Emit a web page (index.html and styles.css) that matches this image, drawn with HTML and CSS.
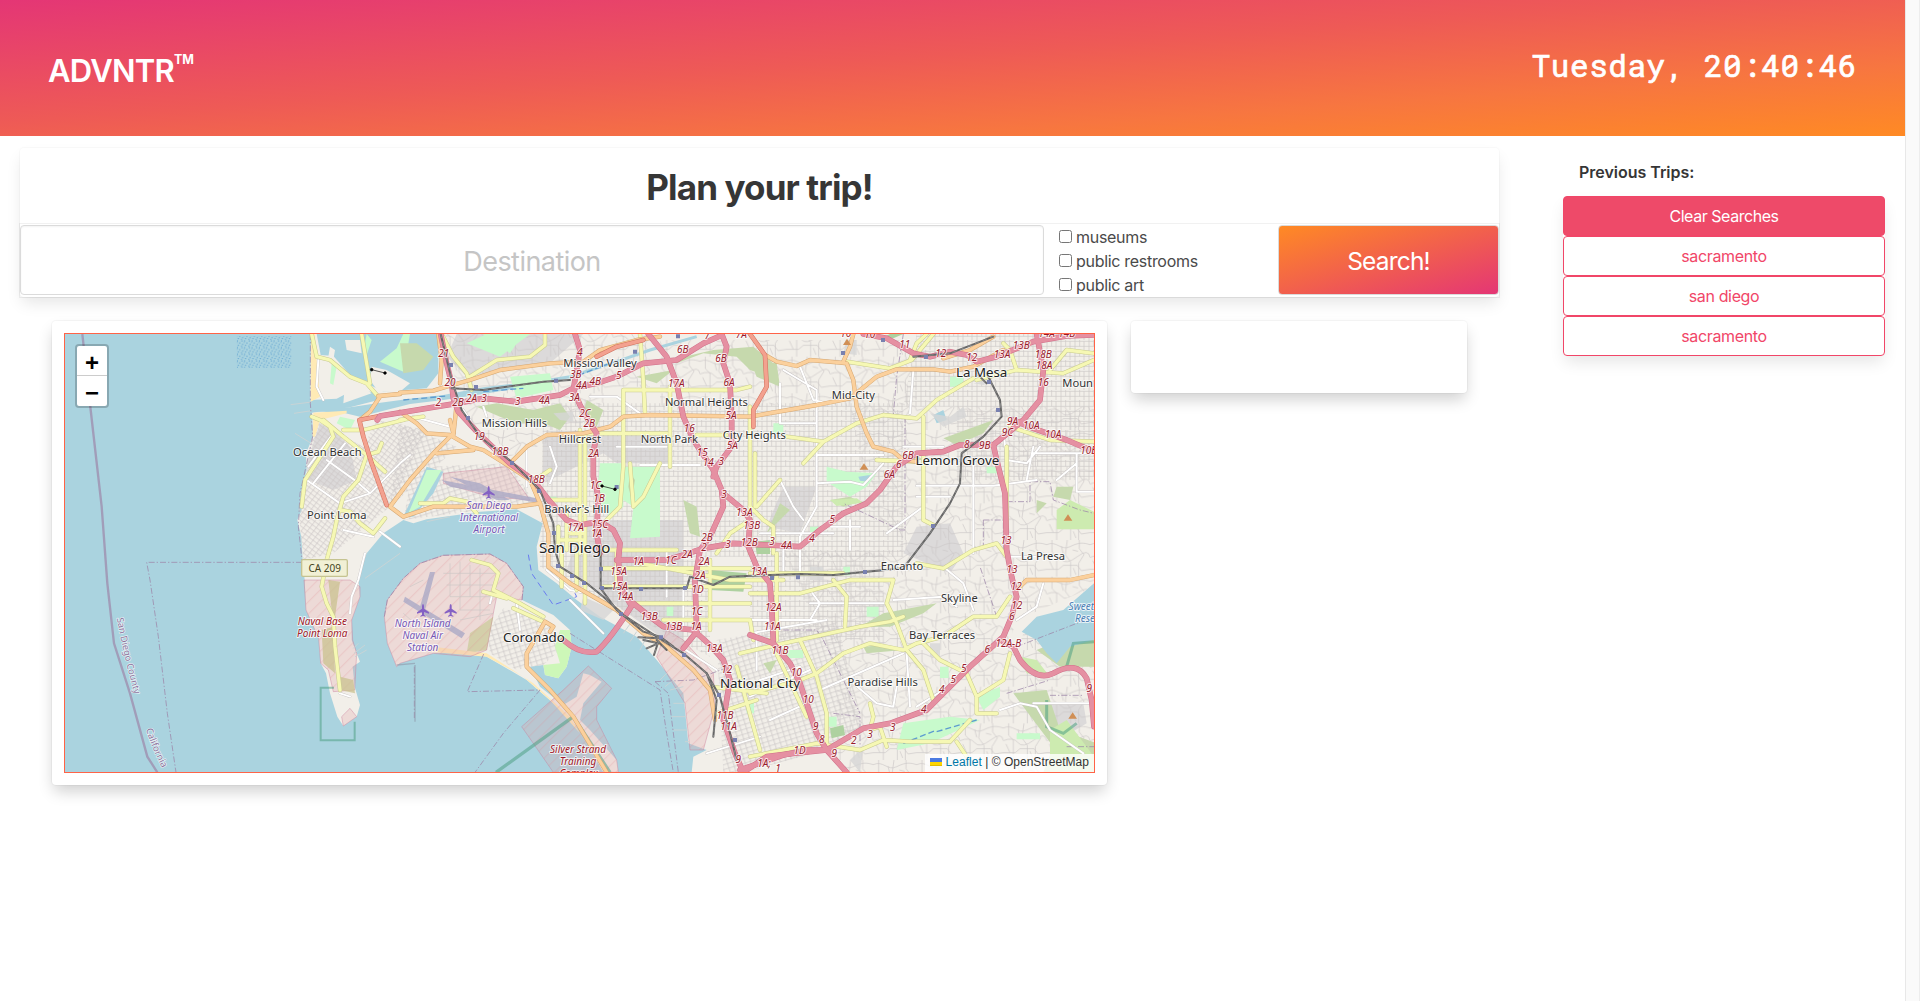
FILE: index.html
```html
<!DOCTYPE html>
<html lang="en">
<head>
<meta charset="utf-8">
<title>ADVNTR</title>
<link rel="stylesheet" href="styles.css">
</head>
<body>
<div class="page">
<header class="hero">
  <h1 class="brand">ADVNTR<sup>TM</sup></h1>
  <p class="clock">Tuesday, 20:40:46</p>
</header>
<div class="layout">
  <main class="main">
    <section class="planner">
      <h2 class="planner-title">Plan your trip!</h2>
      <form class="search">
        <input class="destination" type="text" placeholder="Destination">
        <div class="filters">
          <label><input type="checkbox">museums</label>
          <label><input type="checkbox">public restrooms</label>
          <label><input type="checkbox">public art</label>
        </div>
        <button class="go" type="button">Search!</button>
      </form>
    </section>
    <div class="results">
      <section class="card map-card">
        <div class="map">
<svg class="tiles" viewBox="45 42 3087 1314" preserveAspectRatio="none">
  <defs>
    <pattern id="grid" width="42" height="30" patternUnits="userSpaceOnUse"><path class="st" d="M0 4H42M0 19H42M9 0V30M23 0V19M36 4V30"/></pattern>
    <pattern id="gridTilt" width="34" height="28" patternUnits="userSpaceOnUse" patternTransform="rotate(-17)"><path class="st" d="M0 5H34M0 19H34M8 0V28M25 0V28"/></pattern>
    <pattern id="gridDiag" width="30" height="24" patternUnits="userSpaceOnUse" patternTransform="rotate(37)"><path class="st" d="M0 5H30M0 17H30M8 0V24M23 0V24"/></pattern>
    <pattern id="curvy" width="130" height="110" patternUnits="userSpaceOnUse"><path class="st" d="M0 14C30 0 42 34 70 20S110 8 130 14M0 52Q30 40 44 58T92 50T130 52M0 88H36L50 76H92L104 92L130 88M16 0V36L30 50V110M62 0L56 44L72 66V110M98 0V26L112 44L96 70V110M8 62L20 88M44 18L50 42M78 30L94 34M80 84L88 104"/></pattern>
    <pattern id="hatch" width="26" height="26" patternUnits="userSpaceOnUse" patternTransform="rotate(45)"><path d="M2 0V26" stroke="#e08a90" stroke-opacity=".4" stroke-width="2"/></pattern>
    <pattern id="reef" width="22" height="20" patternUnits="userSpaceOnUse"><path d="M2 3h4M12 1v4M17 9h4M6 11v4M1 18h3M13 16h4M10 8h2" stroke="#5ba0d0" stroke-width="2.5"/></pattern>
    <g id="motorways">
      <path d="M1172 42L1190 130 1205 190 1210 235 1225 275 1290 345 1380 430 1450 480 1500 545 1550 600 1590 615 1650 605 1690 630 1710 670 1705 720 1712 800 1740 850"/>
      <path d="M982 300L990 288 1100 270 1220 250 1300 235 1400 245 1530 225 1570 205 1640 190 1700 170 1780 130 1880 120 1960 70 2010 48"/>
      <path d="M1575 42L1590 90 1580 150 1570 210 1590 255 1620 310 1640 340 1630 400 1630 470 1645 530 1640 640 1650 700"/>
      <path d="M1795 42L1850 110 1880 190 1900 290 1930 360 1990 450 2015 510 2020 560 1980 650 1950 690 1935 780 1940 930"/>
      <path d="M2015 42L2030 80 2020 130 2040 190 2045 300 2045 380 2000 440 1990 470"/>
      <path d="M2020 520L2080 570 2100 600 2095 680 2120 740 2160 790 2165 860 2170 960"/>
      <path d="M1700 720H1850L1900 705 1960 685 2050 670 2250 680 2310 630 2380 580 2450 550 2490 510 2540 440 2600 400 2680 395 2730 375 2830 375 2920 300 2970 240 2980 150 2960 42"/>
      <path d="M2440 42L2510 55 2590 100 2640 110 2700 95 2750 105 2780 125 2840 110 2900 85 2950 65 3050 48 3132 45"/>
      <path d="M2830 375L2840 420 2865 520 2870 690 2885 770 2900 830 2885 890 2860 950 2760 1040 2680 1120 2630 1170 2520 1210 2440 1225 2330 1290 2230 1300 2150 1310 2080 1357"/>
      <path d="M2890 300L2950 325 3050 360 3132 395"/>
      <path d="M1540 960Q1590 1005 1640 995Q1680 960 1750 850L1800 890 1840 920 1930 930 1980 975 2020 1020 2040 1080 2030 1140 2020 1200 2055 1300 2080 1357"/>
      <path d="M1900 985L1940 935M2100 945L2170 970 2220 1030 2250 1090 2280 1180 2300 1240 2330 1290 2390 1357"/>
      <path d="M2860 965L2890 980 2910 1020Q2960 1085 3010 1060Q3080 1020 3110 1075L3125 1140 3132 1220M2070 1350L2200 1305 2270 1290 2330 1290"/>
    </g>
    <g id="primary">
      <path d="M1050 218L1150 212 1190 200 1260 180 1350 150 1500 130 1600 125 1650 90 1760 60 1830 50"/>
      <path d="M985 228L1050 222M1050 275L1100 310 1130 340 1200 345 1260 380 1300 390 1380 440 1440 480 1470 550 1495 640 1495 740 1560 790 1700 870 1780 940 1850 980 1930 1050 1980 1110 1995 1200"/>
      <path d="M990 230L960 275 930 300M1020 560L1080 480 1150 400 1210 340 1200 300M1020 560L1060 590 1150 560 1280 560 1400 560 1470 550"/>
      <path d="M1160 400L1270 390M1210 345L1215 300 1220 250M1380 430L1430 380 1490 345 1600 340 1680 320 1720 290 1800 285 2100 290 2300 255 2400 235 2480 170 2540 148 2650 148 2700 155 2770 140 2860 90"/>
      <path d="M2145 105L2180 125 2240 138 2280 120 2370 128 2390 130 2410 180 2420 260 2450 340 2470 380 2530 395 2560 420 2600 425M2410 42L2400 80 2380 125"/>
      <path d="M1485 905L1465 940 1430 1000 1430 1040 1500 1110 1570 1190 1630 1290 1670 1357M1485 905L1510 920 1500 935M2900 810L2930 780 3060 780 3132 765"/>
      <path d="M1165 42L1175 120 1170 190M2830 50L2760 90 2680 115"/>
    </g>
    <g id="secondary">
      <path d="M785 42L800 110 840 120 900 170 950 190 985 230M935 42L960 190M820 300L880 350 950 405 1005 455M880 330L940 330 1060 300M950 405L925 480 880 530 860 600 850 650 830 720 815 800 830 850 850 890 855 980 870 1110M950 405L985 395 995 370M870 570L900 575 930 610 970 640 1005 595"/>
      <path d="M785 290L810 300 840 320 850 350 765 480 755 560M1175 42L1210 110 1250 160 1265 210M1260 170L1340 120 1440 110 1485 75V42M1600 340H1850M1720 210V440L1710 560 1670 600M1770 42L1780 180 1785 280M1720 210H2060L2100 200M1860 200V440M1740 430L1750 560 1780 530 1830 430M1590 330V700M1605 340V850M1500 540H1590M2100 260V700M1940 345H2030M2210 350L2320 365 2420 310 2500 285 2600 295 2660 240 2770 175M2320 365L2260 430M2390 125L2520 145 2585 120 2650 42"/>
      <path d="M2620 290L2620 600 2650 615M2580 120L2600 70 2630 42M2780 180L2900 150 3040 160 3132 120M2880 320L3000 360 3132 365M2870 380L2870 690M2600 730L2680 745 2770 690 2840 670 2870 710"/>
      <path d="M1660 745H2100M1660 800H2100M1700 690V800M1580 690V810M1535 690V800M1770 730L2040 780H2200M1750 850H2100M1840 900H2100L2110 960M1980 720V930M2100 760H2380M2180 700V960M2100 820H2250L2400 780H2530L2510 850 2540 910 2570 990 2620 1050 2650 1140M2350 780L2390 830 2385 920M2070 1000L2200 970 2430 920 2520 905 2560 890M2100 1120L2250 1080 2300 1060 2380 1000 2460 970 2560 990 2600 970 2680 950 2770 890 2840 890 2880 830M2620 970L2670 1020 2750 1060 2780 1130 2780 1180 2840 1180M2250 960L2300 1070 2330 1180 2330 1280M2160 960L2270 1190M2100 1310L2300 1270 2430 1290 2500 1260 2580 1265 2700 1265 2760 1200M2460 1150L2470 1190 2460 1230 2490 1220 2510 1280M2720 1265L2750 1310M2780 1130L2860 1080 2880 1000"/>
      <path d="M1265 720L1320 735 1345 760 1330 810 1410 850 1480 890M1300 815L1370 835M1390 865L1480 905M2100 560L2140 600 2170 620V700M2120 560L2190 480M2000 700L2040 640 2100 600"/>
      <path d="M1110 550H1180L1200 535 1250 545 1280 580M1050 300L1120 290M1980 1100L2150 1120M2060 1040L2130 1290M2000 1180L2120 1140M2480 420L2600 425M2900 150L2880 90 2860 70M3000 150L3050 90 3132 100"/>
      <path d="M1550 560V690M1525 620V690M1560 640H1600M1530 660H1600M2115 400V560M1660 690H1880M1500 450L1470 470"/>
    </g>
    <g id="tertiary">
      <path d="M805 120L800 200 820 240M775 440L850 340M790 490L885 370M770 480L870 550 960 520 1050 430 1080 405M830 420L920 485 960 520M880 630L970 650M990 635L1050 680M945 700L925 780 905 830 900 880M870 1120L900 1130M1300 260L1310 290M1090 290L1200 320M1240 270L1280 330M1430 385V500M1500 380L1520 440 1500 490M1620 230H1700L1770 280M1700 380H1850M1770 435H1950"/>
      <path d="M2200 150L2300 210V560L2250 650V760M2190 190V310H2300M2250 140L2290 240 2330 250M2590 150L2580 280M2560 380L2680 380M2300 405H2500M2300 490L2400 485 2440 495 2500 430M2600 530H2700M2600 497H2830L2960 480M2770 420V700M2950 380L2930 480M3080 400V515H3132M3020 480L3080 430M2860 330L2870 420 2930 430 2970 380M2950 400H3132M2190 480L2230 560 2260 600M2130 640H2350M2400 600V690M2340 620H2430M2510 640L2620 560"/>
      <path d="M2100 900H2300M2280 850H2510M2280 810L2310 850 2280 900M2100 940L2330 900M2530 840L2680 830 2720 860M2680 740L2740 790 2770 870M2130 1080L2250 1040M2100 1130L2280 1050M2160 1200L2270 1150M2310 1110L2560 1000M2410 1090L2480 1150 2530 1160 2540 1100M2570 1000L2580 1160M2600 1160L2680 1110M2850 1170L2910 1150 2960 1160 3000 1230 3100 1300M2900 900L2960 860 2980 790M2870 710H2960M1850 690V830M1900 800V930M1400 850L1410 930M1330 810L1320 850M1490 750L1560 810 1610 820M1660 940L1560 840M1900 985L2000 1050M1970 1300L2130 1250M2120 940V1050M2200 690V760M2950 1150H3132"/>
    </g>
    <g id="rail">
      <path d="M1172 42L1205 180 1235 270 1290 350 1390 430 1470 510 1510 610 1515 690 1530 740 1610 790 1660 830 1720 885 1820 950 1900 1000 1970 1060 2010 1130 2040 1240 2060 1320"/>
      <path d="M1650 805H1910L1920 770 1990 795 2040 770 2160 765 2250 762 2350 765 2450 755 2560 745 2640 640 2700 550 2730 490 2735 400 2800 350 2855 290 2850 240 2810 160M1652 690V805L1700 870 1780 935 1830 950 1870 980M1820 960L1850 990M1205 205L1300 210 1480 185 1560 180M1970 1060L2000 1140 1990 1250M2780 160L2810 190M2590 110L2700 100 2830 50"/>
      <path d="M1765 952L1830 955M1780 960L1825 970 1790 985M1825 965L1812 1005"/>
    </g>
  </defs>

  <rect x="0" y="0" width="3200" height="1400" fill="#aad3df"/>
  <rect x="560" y="48" width="164" height="96" fill="url(#reef)"/>

  <path class="land" d="M783 42L781 240 860 236 900 215 970 215 985 240 900 262 786 278 789 350 768 400 770 450 752 520 755 570 742 600 754 650 758 720 764 780 768 870 806 955 812 1030 828 1060 840 1120 862 1190 880 1218 920 1190 930 1155 914 1100 908 1040 930 1025 905 960 905 900 930 830 925 770 950 700 1000 640 1060 600 1090 610 1130 598 1290 575 1400 568 1478 610 1460 680 1465 750 1520 790 1580 840 1650 890 1760 950 1820 1020 1900 1120 1915 1270 1970 1290 1930 1310 1925 1357H3140V42Z"/>
  <path class="urban" d="M810 310L850 330 900 380 920 480 850 510 775 480 770 430ZM1220 42H1600L1500 130 1250 170 1190 110ZM1480 350H1860V430H1700L1660 400 1480 490ZM1600 600H1900V1000L1550 750ZM2200 500H2300L2250 640 2150 620ZM2560 700L2600 620 2700 610 2740 700 2700 760ZM2990 1150L3100 1150 3110 1210 3060 1240 2990 1220Z"/>
  <path d="M790 300L940 380 980 300 1130 330 1020 560 850 700 760 720 745 560 775 430Z" fill="url(#gridDiag)"/>
  <path d="M1050 310L1220 380 1180 420 1020 560ZM1080 490L1130 440 1380 430 1460 560 1300 570 1060 600Z" fill="url(#gridTilt)"/>
  <path d="M1185 42H1800V200H1700L1600 330 1350 420 1240 290Z" fill="url(#curvy)"/>
  <path d="M1480 250H2560V710H1980V1010L1470 740Z" fill="url(#grid)"/>
  <path d="M1830 60H2600V260H1830ZM2400 260H3140V1357H2360V1060L2200 690H2560L2460 560Z" fill="url(#curvy)"/>
  <path d="M2600 42H3140V480H2720V260H2560ZM2100 700H2500V960H2100Z" fill="url(#grid)"/>
  <path d="M2000 960L2360 900 2440 1220 2330 1290 2080 1357H2020Z" fill="url(#gridTilt)"/>

  <path class="water" d="M800 42L812 105 850 108 905 170 950 190 1000 215 1130 205 1165 160 1165 42Z"/>
  <path class="water" d="M778 262L900 262 980 250 1080 236 1180 225 1300 202 1440 185 1450 196 1300 222 1180 240 1080 252 930 290 880 278 790 274Z"/>
  <path class="water" d="M1180 455L1130 440 1060 590 1090 590 1150 520Z"/>
  <path d="M1440 190L1560 170 1700 125 1800 90 1940 50" fill="none" stroke="#aad3df" stroke-width="9"/>
  <path fill="#f2efe9" d="M965 140L1010 150 1080 190 1050 215 985 215 960 180ZM885 60L930 60 935 100 890 90ZM840 80L855 90 850 120 835 110ZM885 190L930 195 965 220 880 250Z"/>
  <path class="park" d="M950 42L965 60 945 120 940 100ZM990 125L1040 85 1060 42H1080L1060 155ZM845 130L860 140 850 195 840 190ZM1250 70L1310 42H1440L1350 110ZM1380 170L1500 160 1510 210 1400 235ZM1720 440H1830V650L1740 655 1750 560 1720 540ZM1650 430H1720V560L1680 590 1640 540ZM2330 440L2390 455 2480 460 2450 500 2400 530 2330 485ZM1300 42L1420 42 1380 100ZM870 290L915 300 900 330 860 310ZM1130 450L1175 450 1110 560 1075 580ZM2560 1210L2700 1190 2790 1200 2640 1270 2540 1290ZM2780 1130L2850 1100 2850 1130 2800 1170Z"/>
  <path fill="#c8facc" d="M2700 170h40v30h-40zM2170 310h30v30h-30zM2450 860h36v30h-36zM2670 1040h26v34h-26zM2380 740h20v26h-20zM1850 860h20v28h-20zM2200 990h60v24h-60zM2330 1190h30v30h-30zM2810 440h40v20h-40zM1500 530h20v12h-20zM2090 1140h22v40h-22zM2960 1130h20v30h-20zM2280 620h24v24h-24zM2900 1240h70v18h-70z"/>
  <path class="wood" d="M1050 70L1100 70 1150 110 1120 150 1060 160ZM1280 260L1340 250 1450 270 1530 250 1560 290 1530 330 1480 310 1400 310 1350 290ZM1610 240L1660 270 1640 320 1600 280ZM1760 170L1870 150 1820 190ZM1860 120L1990 90 2110 80 2170 130 2160 170 2100 150 2060 110 1960 100 1880 130ZM1900 540L1940 560 1950 650 1920 640ZM2100 120L2180 130 2190 200 2120 170ZM2680 355L2830 300 2800 340 2720 375ZM2340 540L2400 530 2430 545 2380 560ZM2430 920L2500 880 2660 850 2620 880 2520 920ZM2440 980L2500 975 2560 990 2450 1000ZM3020 500H3070L3060 540 3010 530ZM2960 540L2990 550 2960 580ZM2560 420L2590 400 2620 420ZM2190 550L2220 570 2150 640ZM2890 1120L3010 1280 2980 1357H3140V1270L3030 1230 2990 1110ZM2960 990L3080 940 3132 960V1040H3030ZM2140 1030L2180 1020 2160 1060ZM1740 460L1755 480 1745 540 1735 500Z"/>
  <path fill="#aed1a0" d="M2115 665L2160 660V702H2120ZM1980 750L2090 760 2080 815 1980 810ZM2340 1225L2380 1215 2385 1245 2345 1255ZM2520 42L2560 42 2530 55 2500 52Z"/>
  <path fill="#cdebb0" d="M3020 570L3060 540 3132 575V628H3020ZM2910 1010L2960 1020 3000 1070 2930 1060ZM3000 1230L3050 1200 3132 1310V1357H3000ZM2340 540L2420 535 2440 548 2360 558Z"/>
  <path fill="#f2efe9" d="M2900 900L3132 800V830L3000 900 2920 940 2900 1000 2880 960Z"/>
  <path class="water" d="M2915 935L2960 890 3040 870 3132 790V960L3060 980 3020 1030 2990 1000 2960 960ZM2650 285L2680 270 2690 300 2660 310ZM2425 470L2460 465 2455 485 2430 482Z"/>
  <path fill="#d6d6d6" opacity=".8" d="M2640 280L2700 290 2740 260 2750 290 2680 320ZM2640 970L2670 970V1010H2640ZM1600 830L1690 870 1660 900 1590 870ZM1510 280L1570 275 1570 305 1530 300ZM2390 60L2420 60 2420 105 2380 100ZM2770 190L2830 180 2800 195ZM2400 1320L2440 1280 2430 1357ZM2280 740H2320V780H2280Z"/>

  <path class="land" d="M1003 890L1012 840 1060 775 1110 730 1180 706 1320 702 1370 730 1420 800 1416 840 1510 885 1560 930 1565 980 1550 1040 1525 1075 1485 1065 1480 1035 1440 1040 1470 1100 1540 1155 1580 1130 1600 1060 1620 1065 1655 1085 1600 1150 1590 1200 1620 1230 1700 1320 1705 1357H1660L1590 1230 1510 1150 1430 1080 1310 1010 1260 995 1150 1000 1050 1030 1040 1040 1012 970Z"/>
  <path d="M1360 865L1500 910 1540 980 1480 1035 1440 1040 1400 1050 1320 1000 1310 940Z" fill="url(#gridTilt)"/>
  <path fill="#cfe0a8" d="M1260 940L1330 890 1310 990 1250 1000Z"/>
  <path fill="#ffeab5" d="M1150 980L1310 1000 1450 1090 1560 1190 1660 1357 1590 1240 1500 1140 1420 1070 1310 1010 1140 995ZM790 278L890 272 890 280 810 300 795 350 788 350ZM783 42H795L800 120 810 230 782 245Z"/>
  <path fill="#cdf7b8" d="M1530 930L1560 930 1565 980 1550 1040 1525 1075 1485 1065 1480 1035 1530 1030 1515 980Z"/>
  <g class="military">
    <path d="M1003 890L1012 840 1060 775 1110 730 1180 706 1320 702 1370 730 1420 800 1416 840 1340 830 1330 880 1310 990 1260 1010 1150 1000 1050 1030 1040 1040 1012 970Z"/>
    <path d="M762 780H900L930 800 930 830 905 900 908 960 920 1000 914 1110 850 1115 835 1050 812 1030 806 955 768 870ZM875 1190L900 1165 920 1190 880 1218Z"/>
    <path d="M1415 1220L1540 1110 1615 1038 1685 1105 1640 1160 1640 1200 1700 1320 1705 1357H1510L1450 1270Z"/>
    <path d="M1180 460L1370 440 1440 540 1320 530 1180 490ZM1820 1010L1850 930 1900 960 1990 1060 1995 1160 1960 1290H1920L1905 1150Z"/>
  </g>
  <g fill="url(#hatch)">
    <path d="M1003 890L1012 840 1060 775 1110 730 1180 706 1320 702 1370 730 1420 800 1416 840 1340 830 1330 880 1310 990 1260 1010 1150 1000 1050 1030 1040 1040 1012 970ZM762 780H900L930 800 930 830 905 900 908 960 920 1000 914 1110 850 1115 835 1050 812 1030 806 955 768 870Z"/>
    <path d="M1415 1220L1540 1110 1615 1038 1685 1105 1640 1160 1640 1200 1700 1320 1705 1357H1510L1450 1270ZM1820 1010L1850 930 1900 960 1990 1060 1995 1160 1960 1290H1920L1905 1150Z"/>
  </g>
  <path fill="#c9c18f" opacity=".75" d="M835 780L870 785 855 890 845 870ZM815 930L850 920 855 1060 820 1030ZM870 1070L910 1080 915 1120 870 1110Z"/>
  <path fill="#aaa9c6" opacity=".8" d="M1175 480L1460 535 1470 550 1200 500ZM1200 470L1290 490 1380 540 1340 540ZM1065 830L1245 940 1235 955 1060 845ZM1140 756L1155 756 1125 870 1110 860Z"/>
  <path class="st" d="M1200 730V830H1330M1230 725V870M1260 735V830M1290 745V900M1180 760H1340M1190 795H1330M1230 870H1320M1060 880L1150 960M1080 800L1120 780M1330 880L1230 900"/>

  <g class="pier"><path d="M722 254L785 246M732 280L785 272M735 340L780 368M910 985L925 970M912 1000L945 975M915 1010L950 990M945 775L1050 700M1130 605L1200 590M1900 1100L1860 1110M1905 1150H1870M1910 1190H1865M1915 1230H1870M1770 990L1790 950M1740 965L1760 935M1905 1265H1920M1850 1060L1830 1080M1870 1080L1845 1100M1720 940L1745 905M1700 920L1720 890"/></g>
  <g class="admin">
    <path class="county" d="M97 42L122 270 155 560 172 790 192 970 240 1120 292 1310 322 1357"/>
    <path d="M756 727H290L300 780 325 950 352 1180 378 1357M781 42V250L788 350 768 440 750 520 745 620 756 720"/>
    <path d="M1003 890L1012 840 1060 775 1110 730 1180 706 1320 702 1370 730 1420 800 1416 840M1093 1040V1200M1301 1002L1252 1115 1470 1110 1360 1240 1275 1357M1560 940L1830 1110 1850 1240 1870 1357M1815 1085L1855 1120 1885 1357M1815 1085L1930 1080 2040 1040"/>
    <path d="M2560 42L2540 170 2530 285M2565 290V630H2550L2380 550M2800 600H2860V690M2870 545H2940V485H3000L3010 540 3090 570 3132 580M2800 600V680M2200 930H2300L2320 960 2430 1180M2840 890L2810 800 2790 740M2900 980L3132 890M2870 1120L3000 1080M2350 1180L2430 1190V1280M3000 1126H3100M3050 1280H3132"/>
  </g>
  <path d="M1040 1035L1095 1030M1095 1035V1205" stroke="#8e96a8" stroke-width="4" fill="none" opacity=".6"/>
  <g fill="none" stroke="#4fa184" stroke-opacity=".55" stroke-width="6"><path d="M852 1103H812V1261H914V1205"/><path d="M1338 1357L1570 1190M1570 1190L1680 1357" stroke-width="10"/><path d="M3050 1040L3070 970 3132 965M2990 1140V1220L3040 1240 3080 1210" stroke-width="9"/></g>
  <path d="M1435 704L1445 760 1510 855 1580 830 1570 810" fill="none" stroke="#6a7cf0" stroke-width="3" stroke-dasharray="18 12"/>
  <path d="M1060 240L1190 228M1300 215L1420 205M1560 175L1720 115M2660 1235L2780 1200M2560 1270L2660 1230" fill="none" stroke="#5d9bd0" stroke-width="4" stroke-dasharray="18 9"/>

  <use href="#tertiary" class="line t-case"/><use href="#tertiary" class="line t-fill"/>
  <use href="#secondary" class="line s-case"/><use href="#secondary" class="line s-fill"/>
  <use href="#primary" class="line p-case"/><use href="#primary" class="line p-fill"/>
  <path class="line trunk-case" d="M990 288L928 300 940 350 965 430 1010 555M2100 42L2145 105 2150 200 2110 270V320M1780 60L1700 80 1640 110"/>
  <path class="line trunk" d="M990 288L928 300 940 350 965 430 1010 555M2100 42L2145 105 2150 200 2110 270V320M1780 60L1700 80 1640 110"/>
  <use href="#motorways" class="line m-case"/><use href="#motorways" class="line m-fill"/>
  <use href="#rail" class="line rail"/><use href="#rail" class="line rail-dash"/>

  <g fill="#7981b0"><path d="M1197 129h12v12h-12zM1272 195h12v12h-12zM1248 288h12v12h-12zM1380 423h12v12h-12zM1461 507h12v12h-12zM1506 633h12v12h-12zM1512 176h12v12h-12zM1749 89h12v12h-12zM1878 43h12v12h-12zM1694 495h12v12h-12zM1518 732h12v12h-12zM1560 762h12v12h-12zM1596 783h12v12h-12zM1647 741h12v12h-12zM1650 798h12v12h-12zM1767 801h12v12h-12zM1899 798h12v12h-12zM1707 876h12v12h-12zM1827 946h12v12h-12zM1896 999h12v12h-12zM2001 1119h12v12h-12zM2049 1254h12v12h-12zM2493 54h12v12h-12zM2373 93h12v12h-12zM2622 105h12v12h-12zM2811 180h12v12h-12zM2838 264h12v12h-12zM2643 612h12v12h-12zM2439 750h12v12h-12zM2238 766h12v12h-12zM2160 768h12v12h-12z"/></g>
  <g fill="#d08f55"><path d="M2391 56l12 19h-24zM2442 430l13 19h-26zM3054 583l13 19h-26zM3068 1177l13 19h-26z"/></g>
  <g stroke="#000" stroke-width="2" fill="#000"><path d="M965 149L1005 159M1656 498L1695 508"/><circle cx="965" cy="149" r="4"/><circle cx="1005" cy="159" r="4"/><circle cx="1656" cy="498" r="4"/><circle cx="1695" cy="508" r="4"/></g>
  <defs><path id="plane" d="M0-19Q3-18 3-12V-5L18 6V10L3 5V13L8 17V19L0 17-8 19V17L-3 13V5L-18 10V6L-3-5V-12Q-3-18 0-19"/></defs>
  <g fill="#8461c4"><use href="#plane" x="1316" y="517"/><use href="#plane" x="1119" y="871"/><use href="#plane" x="1202" y="871"/></g>

  <g class="exit">
    <text x="1181" y="110">21</text><text x="1200" y="197">20</text><text x="1165" y="259">2</text><text x="1224" y="257">2B</text><text x="1265" y="245">2A</text><text x="1302" y="245">3</text><text x="1403" y="254">3</text><text x="1483" y="251">4A</text><text x="1288" y="361">19</text><text x="1350" y="404">18B</text><text x="1459" y="488">18B</text>
    <text x="1589" y="107">4</text><text x="1577" y="174">3B</text><text x="1595" y="208">4A</text><text x="1636" y="195">4B</text><text x="1706" y="176">5</text><text x="1573" y="243">3A</text><text x="1605" y="290">2C</text><text x="1618" y="322">2B</text><text x="1631" y="410">2A</text><text x="1636" y="506">1C</text><text x="1647" y="547">1B</text><text x="1649" y="623">15C</text><text x="1577" y="634">17A</text><text x="1640" y="652">1A</text>
    <text x="1898" y="98">6B</text><text x="2013" y="126">6B</text><text x="2037" y="199">6A</text><text x="1879" y="202">17A</text><text x="2043" y="297">5A</text><text x="1918" y="336">16</text><text x="2047" y="387">5A</text><text x="1957" y="408">15</text><text x="1975" y="438">14</text><text x="2014" y="436">3</text><text x="2022" y="534">3</text><text x="2083" y="588">13A</text><text x="2105" y="626">13B</text><text x="2098" y="679">12B</text><text x="1971" y="662">2B</text><text x="1962" y="693">2</text><text x="2034" y="684">3</text><text x="1911" y="714">2A</text><text x="1972" y="57">7</text><text x="2074" y="54">7A</text>
    <text x="1765" y="735">1A</text><text x="1821" y="735">1</text><text x="1863" y="731">1C</text><text x="1962" y="735">2A</text><text x="1706" y="766">15A</text><text x="1709" y="811">15A</text><text x="1725" y="840">14A</text><text x="1950" y="777">2A</text><text x="1943" y="819">1D</text><text x="1940" y="885">1C</text><text x="1798" y="901">13B</text><text x="1871" y="930">13B</text><text x="1938" y="931">1A</text><text x="1993" y="995">13A</text><text x="2030" y="1058">12</text><text x="2025" y="1197">11B</text><text x="2036" y="1231">11A</text><text x="2065" y="1328">9</text>
    <text x="2127" y="765">13A</text><text x="2170" y="874">12A</text><text x="2167" y="930">11A</text><text x="2190" y="1003">11B</text><text x="2239" y="1067">10</text><text x="2275" y="1149">10</text><text x="2297" y="1229">9</text><text x="2315" y="1268">8</text><text x="2353" y="1311">9</text><text x="2249" y="1303">1D</text><text x="2142" y="1340">1A;</text><text x="2184" y="1356">1</text><text x="2411" y="1272">2</text><text x="2460" y="1254">3</text><text x="2528" y="1232">3</text><text x="2621" y="1179">4</text><text x="2675" y="1120">4</text><text x="2710" y="1088">5</text><text x="2741" y="1055">5</text><text x="2812" y="999">6</text><text x="2875" y="980">12A-B</text><text x="2885" y="899">6</text><text x="2900" y="868">12</text><text x="2899" y="811">12</text><text x="2886" y="759">13</text><text x="3118" y="1115">9</text>
    <text x="2166" y="675">3</text><text x="2210" y="686">4A</text><text x="2286" y="666">4</text><text x="2347" y="610">5</text><text x="2518" y="475">6A</text><text x="2546" y="445">6</text><text x="2574" y="416">6B</text><text x="2750" y="383">8</text><text x="2804" y="386">9B</text><text x="2872" y="347">9C</text><text x="2888" y="316">9A</text><text x="2944" y="326">10A</text><text x="3009" y="355">10A</text><text x="3116" y="401">10B</text><text x="2980" y="197">16</text><text x="2982" y="146">18A</text><text x="2980" y="114">18B</text><text x="2914" y="87">13B</text><text x="2856" y="113">13A</text><text x="2765" y="124">12</text><text x="2672" y="110">12</text><text x="2564" y="83">11</text><text x="2459" y="53">10</text><text x="2387" y="52">10</text><text x="2990" y="52">14A</text><text x="3050" y="50">14B</text><text x="2868" y="671">13</text>
  </g>
  <g class="place">
    <text x="832" y="409">Ocean Beach</text><text x="860" y="597">Point Loma</text><text x="1650" y="141">Mission Valley</text><text x="1393" y="322">Mission Hills</text><text x="1590" y="370">Hillcrest</text><text x="1969" y="257">Normal Heights</text><text x="1858" y="370">North Park</text><text x="2113" y="356">City Heights</text><text x="1580" y="578">Banker's Hill</text><text x="2410" y="236">Mid-City</text><text x="3083" y="201">Moun</text><text x="2979" y="721">La Presa</text><text x="2556" y="749">Encanto</text><text x="2728" y="846">Skyline</text><text x="2676" y="958">Bay Terraces</text><text x="2498" y="1098">Paradise Hills</text>
  </g>
  <g class="town"><text x="2795" y="171">La Mesa</text><text x="2722" y="435">Lemon Grove</text><text x="1452" y="965">Coronado</text><text x="2130" y="1105">National City</text></g>
  <text class="city" x="1574" y="700">San Diego</text>
  <g class="air"><text x="1317" y="568">San Diego</text><text x="1317" y="604">International</text><text x="1317" y="640">Airport</text><text x="1118" y="922">North Island</text><text x="1118" y="958">Naval Air</text><text x="1118" y="994">Station</text></g>
  <g class="mil"><text x="817" y="915">Naval Base</text><text x="817" y="951">Point Loma</text><text x="1584" y="1300">Silver Strand</text><text x="1584" y="1336">Training</text><text x="1586" y="1371">Complex</text></g>
  <g class="lake"><text x="3105" y="869">Sweetw</text><text x="3118" y="905">Reserv</text></g>
  <path id="coA" d="M200 895Q228 1040 272 1190" fill="none"/><path id="coB" d="M288 1228Q306 1290 350 1370" fill="none"/>
  <g class="border-name"><text><textPath href="#coA">San Diego County</textPath></text><text><textPath href="#coB">California</textPath></text></g>
  <rect x="755" y="719" width="137" height="50" rx="4" fill="#f1f0d5" stroke="#c5c391" stroke-width="4"/><text class="shield" x="824" y="756">CA 209</text>
</svg>
          <div class="zoom"><span>+</span><span>−</span></div>
          <div class="credit"><svg width="12" height="8" viewBox="0 0 12 8"><path fill="#4C7BE1" d="M0 0h12v4H0z"/><path fill="#FFD500" d="M0 4h12v3H0z"/><path fill="#E0BC00" d="M0 7h12v1H0z"/></svg> <a>Leaflet</a> | © OpenStreetMap</div>
        </div>
      </section>
      <section class="card info-card"></section>
    </div>
  </main>
  <aside class="history">
    <h3>Previous Trips:</h3>
    <div class="history-list">
      <button class="clear" type="button">Clear Searches</button>
      <button type="button">sacramento</button>
      <button type="button">san diego</button>
      <button type="button">sacramento</button>
    </div>
  </aside>
</div>
</div>
<div class="scroll-track"></div>
</body>
</html>
```
FILE: styles.css
```css
* { box-sizing: border-box; margin: 0; }
body { display: flex; height: 1001px; overflow: hidden; background: #fff; color: #4a4a4a; font: 16px/24px Inter, "Liberation Sans", sans-serif; }
button, input { font: inherit; }
.page { flex: 1; min-width: 0; }
.scroll-track { width: 15px; background: #fafafa; border-left: 1px solid #e8e8e8; border-right: 1px solid #ededed; }

.hero { display: flex; justify-content: space-between; align-items: center; height: 136px; padding: 0 48px; color: #fff; background: linear-gradient(to bottom right, #e43675, #ee5a56 45%, #f77640 74%, #ff8a24); }
.brand { font-size: 31px; line-height: 36px; font-weight: 600; letter-spacing: -.75px; padding-top: 5px; }
.brand sup { font-size: 12.5px; font-weight: 700; line-height: 0; vertical-align: 18px; letter-spacing: -.1px; }
.clock { font: 31px/36px "Roboto Mono", "DejaVu Sans Mono", monospace; font-weight: 400; letter-spacing: .53px; -webkit-text-stroke: .7px #fff; padding-bottom: 6px; }

.layout { display: flex; }
.main { width: 1519px; padding: 12px 20px; }
.planner { height: 149px; border-radius: 4px; box-shadow: 0 8px 16px -2px rgba(10,10,10,.1), 0 0 0 1px rgba(10,10,10,.02); }
.planner-title { height: 76px; font-size: 35px; line-height: 78px; font-weight: 700; color: #363636; text-align: center; letter-spacing: -.87px; }
.search { display: flex; height: 73px; padding: 1px 0 2px; box-shadow: 0 0 0 1px rgba(10,10,10,.06); }
.destination { width: 1024px; height: 70px; padding: 3px 2px 1px; border: 1px solid #dbdbdb; border-radius: 4px; text-align: center; font-size: 27px; letter-spacing: -.55px; color: #363636; box-shadow: inset 0 1px 2px rgba(10,10,10,.05); }
.destination::placeholder { color: #c5c5c5; }
.filters { width: 234px; padding-left: 15px; }
.filters label { display: flex; align-items: center; height: 24px; letter-spacing: -.3px; }
.filters input { width: 13px; height: 13px; margin: 0 4px 2px 0; }
.go { width: 221px; height: 70px; padding: 2px 6px 0; border: 1px solid #dbdbdb; border-radius: 4px; color: #fff; font-size: 24.5px; letter-spacing: -.8px; background: linear-gradient(to top left, #e43675, #ff8a24); }

.results { display: flex; align-items: flex-start; gap: 24px; padding: 24px 32px; }
.card { border-radius: 4px; background: #fff; box-shadow: 0 8px 16px -2px rgba(10,10,10,.2), 0 0 0 1px rgba(10,10,10,.03); }
.map-card { width: 1055px; height: 464px; padding: 12px; }
.info-card { width: 336px; height: 72px; }
.map { position: relative; width: 1031px; height: 440px; border: 1px solid tomato; overflow: hidden; background: #aad3df; }
.tiles { display: block; width: 1029px; height: 438px; }
.zoom { position: absolute; left: 10px; top: 10px; width: 34px; height: 64px; border: 2px solid rgba(0,0,0,.2); border-radius: 4px; background: #fff; background-clip: padding-box; color: #000; }
.zoom span { display: block; height: 30px; text-align: center; font: bold 24px/34px "Liberation Sans", sans-serif; }
.zoom span:first-child { border-bottom: 1px solid #ccc; }
.credit { position: absolute; right: 0; bottom: 0; height: 18px; padding: 0 5px; background: rgba(255,255,255,.8); color: #333; font: 12px/17px "Liberation Sans", Arial, sans-serif; letter-spacing: .03px; white-space: nowrap; }
.credit a { color: #0078a8; }

.history { width: 386px; padding: 24px 20px 0 44px; }
.history h3 { padding-left: 16px; font-size: 16px; font-weight: 600; color: #363636; letter-spacing: -.02px; }
.history-list { display: flex; flex-direction: column; margin-top: 12px; border-radius: 4px; box-shadow: 0 8px 16px -2px rgba(10,10,10,.1); }
.history-list button { height: 40px; border: 1px solid #f14668; border-radius: 4px; background: #fff; color: #f14668; letter-spacing: -.35px; }
.history-list .clear { background: #ee4a69; color: #fff; letter-spacing: -.45px; }

.st { fill: none; stroke: #cbc7c6; stroke-width: 2; }
.land { fill: #f2efe9; }
.water { fill: #aad3df; }
.urban { fill: #dcdada; }
.park { fill: #c8facc; }
.wood { fill: #c6d9ad; }
.pier path { fill: none; stroke: #c8d4d6; stroke-width: 3; }
.military path { fill: rgba(226,170,175,.3); stroke: rgba(200,120,150,.4); stroke-width: 3; }
.admin path { fill: none; stroke: #9c86a8; stroke-opacity: .75; stroke-width: 3; stroke-dasharray: 18 6 4 6; }
.admin .county { stroke-width: 7; stroke-dasharray: none; stroke-opacity: .7; }
.line { fill: none; stroke-linejoin: round; stroke-linecap: round; }
.t-case { stroke: #c5c1c1; stroke-width: 8; }
.t-fill { stroke: #fff; stroke-width: 6; }
.s-case { stroke: #c8ca8f; stroke-width: 13; }
.s-fill { stroke: #f6f8b4; stroke-width: 10; }
.p-case { stroke: #d5a670; stroke-width: 13; }
.p-fill { stroke: #fbd09c; stroke-width: 10; }
.trunk-case { stroke: #d0705c; stroke-width: 14; }
.trunk { stroke: #f3a18f; stroke-width: 11; }
.m-case { stroke: #d0708a; stroke-width: 17; }
.m-fill { stroke: #e590a2; stroke-width: 14; }
.rail { stroke: #656565; stroke-width: 6; }
.rail-dash { stroke: #999; stroke-width: 2; stroke-dasharray: 12 12; }
.tiles text { font-family: "Noto Sans", sans-serif; text-anchor: middle; paint-order: stroke; stroke: rgba(255,255,255,.75); stroke-width: 6px; stroke-linejoin: round; }
.tiles .exit text { font-size: 30px; font-style: italic; fill: #991c2c; }
.place text { font-size: 33.5px; fill: #333; }
.town text { font-size: 40px; fill: #222; }
.tiles .city { font-size: 45px; fill: #222; }
.air text { font-size: 30px; font-style: italic; fill: #7657b5; }
.mil text { font-size: 30px; font-style: italic; fill: #a01828; }
.lake text { font-size: 30px; font-style: italic; fill: #4c80b5; }
.tiles .border-name text { font-size: 28px; fill: #8d739c; text-anchor: start; stroke-width: 4px; }
.tiles .shield { font-size: 30px; fill: #444422; stroke: none; }
```
